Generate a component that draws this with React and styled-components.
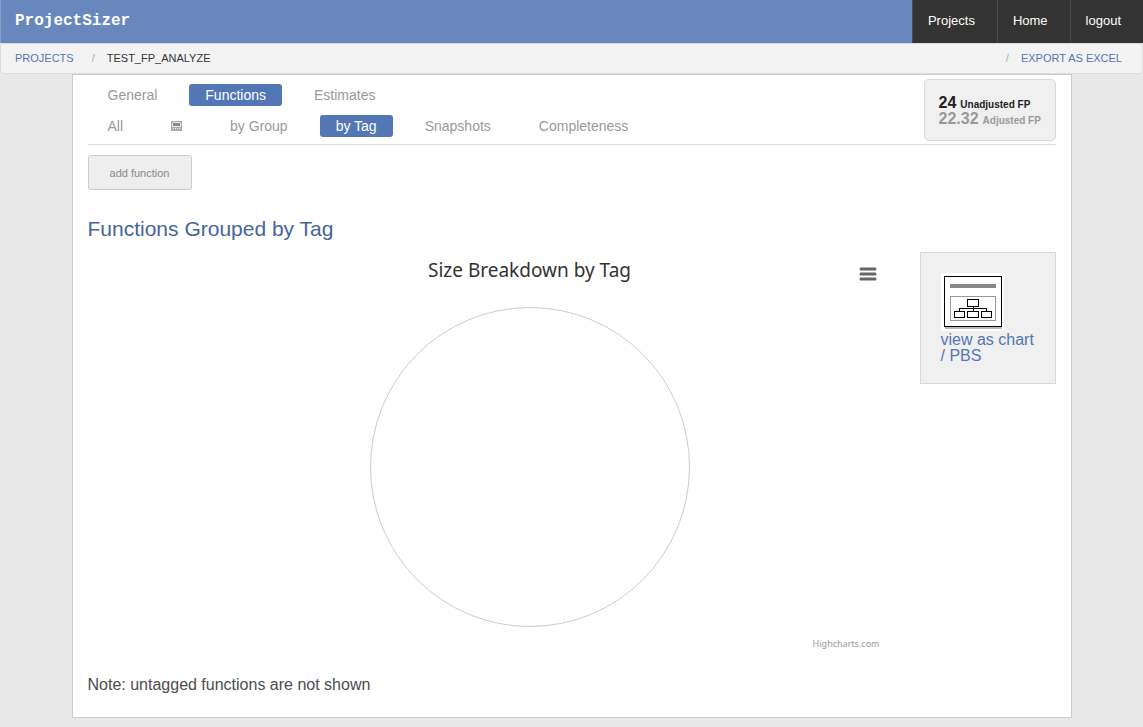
import React from "react";
import styled, { createGlobalStyle } from "styled-components";

const GlobalStyle = createGlobalStyle`
  *, *::before, *::after { box-sizing: border-box; }
  body {
    margin: 0;
    background: #e8e8e8;
    color: #4d4d4d;
    font-family: "Liberation Sans", Arial, sans-serif;
    font-size: 16px;
  }
  a { color: #5376b5; text-decoration: none; }
  h1, h2, h3, p, ul, ol { margin: 0; padding: 0; }
  ul, ol { list-style: none; }
`;

const TopBar = styled.header`
  display: flex;
  justify-content: space-between;
  height: 43px;
  border-left: 1px solid #84a0cc;
  background: #6888bd;
`;

const Brand = styled.h1`
  padding: 0 14px;
  color: #fff;
  font: bold 16px/42px "Liberation Mono", "Courier New", monospace;
`;

const TopNav = styled.nav`
  display: flex;
`;

const TopLink = styled.a`
  padding: 0 22px 0 15px;
  border-left: 1px solid #4a4a4a;
  background: #333;
  color: #fff;
  font-size: 13px;
  line-height: 41px;
`;

const CrumbBar = styled.nav`
  display: flex;
  justify-content: space-between;
  height: 31px;
  padding: 0 20px 0 14px;
  border: 1px solid #dcdcdc;
  border-radius: 3px;
  background: #f3f3f3;
  color: #333;
  font-size: 11px;
  line-height: 29px;
  text-transform: uppercase;
`;

const Crumbs = styled.ul`
  display: flex;
  gap: 18px;
`;

const Crumb = styled.li`
  display: flex;
  gap: 12px;

  &::before {
    content: ${(p) => (p.$slash ? '"/"' : "none")};
    color: #aaa;
  }
`;

const Page = styled.main`
  max-width: 1000px;
  margin: 0 auto;
  padding: 0 15px 23px;
  border: 1px solid #ccc;
  background: #fff;
`;

const ProjectHeader = styled.div`
  display: flex;
  justify-content: space-between;
  align-items: flex-start;
  padding-bottom: 3px;
  border-bottom: 1px solid #ddd;
`;

const TabRows = styled.nav`
  display: flex;
  flex-direction: column;
  gap: 9px;
  padding: 9px 0 4px 4px;
`;

const TabRow = styled.ul`
  display: flex;
  gap: 16px;
`;

const Tab = styled.a`
  display: flex;
  align-items: center;
  height: 22px;
  padding: 0 16px;
  border-radius: 3px;
  background: ${(p) => (p.$active ? "#5376b5" : "transparent")};
  color: ${(p) => (p.$active ? "#fff" : "#999")};
  font-size: 14px;
  line-height: 22px;
`;

const Totals = styled.div`
  width: 132px;
  height: 62px;
  margin-top: 4px;
  padding: 15px 0 0 14px;
  border: 1px solid #d8d8d8;
  border-radius: 5px;
  background: #f0f0f0;
`;

const Total = styled.p`
  display: flex;
  align-items: baseline;
  gap: 4px;
  height: 16px;
  color: ${(p) => (p.$muted ? "#999" : "#222")};
  font-size: 10px;
  font-weight: bold;
  line-height: 16px;
  white-space: nowrap;

  strong { font-size: 16px; }
`;

const AddButton = styled.button`
  display: block;
  min-width: 104px;
  height: 35px;
  margin-top: 10px;
  padding: 0 20px;
  border: 1px solid #ccc;
  border-radius: 3px;
  background: #eee;
  color: #888;
  font: 11px "Liberation Sans", Arial, sans-serif;
`;

const SectionTitle = styled.h2`
  margin: 27px 0 11px;
  color: #45659b;
  font-size: 21px;
  font-weight: normal;
  line-height: 24px;
`;

const Columns = styled.div`
  display: flex;
  align-items: flex-start;
  gap: 30px;
`;

const ChartPanel = styled.figure`
  display: flex;
  flex: 1;
  flex-direction: column;
  max-width: 720px;
  margin: 0 0 0 auto;
  font-family: "Noto Sans", "Lucida Grande", sans-serif;
`;

const ChartHead = styled.figcaption`
  display: grid;
  grid-template-columns: 1fr auto 1fr;
  padding: 6px 10px 0;
`;

const ChartTitle = styled.h3`
  grid-column: 2;
  color: #333;
  font-size: 19px;
  font-weight: normal;
  line-height: 24px;
`;

const MenuButton = styled.button`
  display: flex;
  align-items: center;
  justify-content: center;
  justify-self: end;
  width: 24px;
  height: 22px;
  margin-top: 5px;
  padding: 0;
  border: 0;
  background: none;
`;

const PieDrawing = styled.svg`
  display: block;
  align-self: center;
  width: 100%;
  max-width: 320px;
  margin-top: 22px;
`;

const Credits = styled.a`
  align-self: flex-end;
  margin: 11px 10px 0 0;
  color: #999;
  font-size: 9px;
  line-height: 12px;
`;

const SideBox = styled.aside`
  flex: none;
  width: 136px;
  padding: 20px 20px 19px;
  border: 1px solid #d8d8d8;
  background: #f0f0f0;
  line-height: 16px;

  svg {
    display: block;
    margin-bottom: 1px;
  }
`;

const Note = styled.p`
  margin-top: 26px;
  line-height: 18px;
`;

const GridIcon = () => (
  <svg width="11" height="10" viewBox="0 0 11 10" role="img" aria-label="Calculator" shapeRendering="crispEdges">
    <path fill="#aaa" d="M0 0h11v10H0z" />
    <path fill="#ededed" d="M2 1h7v1H2zM1 2h1v4H1zM9 2h1v4H9zM2 5h7v1H2zM2 7h1v1H2zM4 7h1v1H4zM6 7h1v1H6zM8 7h1v1H8z" />
    <path fill="#888" d="M2 2h7v3H2z" />
  </svg>
);

const BreakdownIcon = () => (
  <svg width="63" height="58" viewBox="0 0 63 58" aria-hidden="true" shapeRendering="crispEdges">
    <path fill="#fff" d="M0 0h63v58H0z" />
    <path fill="#bbb" d="M4 54h57v2H4z" />
    <path fill="none" stroke="#000" d="M3.5 3.5h57v50h-57z" />
    <path fill="#888" d="M9 11h46v4H9z" />
    <path fill="none" stroke="#999" d="M9.5 23.5h45v24h-45z" />
    <path
      fill="none"
      stroke="#000"
      d="M26.5 26.5h11v7h-11zM32.5 34v4M18.5 38v-2.5h27V38M13.5 38.5h10v6h-10zM26.5 38.5h11v6h-11zM40.5 38.5h10v6h-10z"
    />
  </svg>
);

const MenuIcon = () => (
  <svg width="18" height="14" viewBox="0 0 18 14" aria-hidden="true">
    <path d="M2 2h14M2 7h14M2 12h14" stroke="#666" strokeWidth="3" strokeLinecap="round" />
  </svg>
);

const sections = [
  { label: "General" },
  { label: "Functions", active: true },
  { label: "Estimates" },
];

const views = [
  { label: "All" },
  { label: "Calculator", icon: <GridIcon /> },
  { label: "by Group" },
  { label: "by Tag", active: true },
  { label: "Snapshots" },
  { label: "Completeness" },
];

const Tabs = ({ items }) => (
  <TabRow>
    {items.map(({ label, icon, active }) => (
      <li key={label}>
        <Tab href="#" $active={active} aria-current={active ? "page" : undefined}>
          {icon || label}
        </Tab>
      </li>
    ))}
  </TabRow>
);

export default function App() {
  return (
    <>
      <GlobalStyle />
      <TopBar>
        <Brand>ProjectSizer</Brand>
        <TopNav>
          <TopLink href="#">Projects</TopLink>
          <TopLink href="#">Home</TopLink>
          <TopLink href="#">logout</TopLink>
        </TopNav>
      </TopBar>
      <CrumbBar>
        <Crumbs>
          <Crumb><a href="#">Projects</a></Crumb>
          <Crumb $slash>test_fp_analyze</Crumb>
        </Crumbs>
        <Crumbs>
          <Crumb $slash><a href="#">Export as Excel</a></Crumb>
        </Crumbs>
      </CrumbBar>
      <Page>
        <ProjectHeader>
          <TabRows>
            <Tabs items={sections} />
            <Tabs items={views} />
          </TabRows>
          <Totals>
            <Total><strong>24</strong> Unadjusted FP</Total>
            <Total $muted><strong>22.32</strong> Adjusted FP</Total>
          </Totals>
        </ProjectHeader>
        <AddButton type="button">add function</AddButton>
        <SectionTitle>Functions Grouped by Tag</SectionTitle>
        <Columns>
          <ChartPanel>
            <ChartHead>
              <ChartTitle>Size Breakdown by Tag</ChartTitle>
              <MenuButton type="button" aria-label="Chart menu"><MenuIcon /></MenuButton>
            </ChartHead>
            <PieDrawing viewBox="0 0 320 320" role="img" aria-label="Empty pie chart">
              <circle cx="160" cy="160" r="159.5" fill="none" stroke="#ccc" />
            </PieDrawing>
            <Credits href="#">Highcharts.com</Credits>
          </ChartPanel>
          <SideBox>
            <a href="#">
              <BreakdownIcon />
              view as chart / PBS
            </a>
          </SideBox>
        </Columns>
        <Note>Note: untagged functions are not shown</Note>
      </Page>
    </>
  );
}
